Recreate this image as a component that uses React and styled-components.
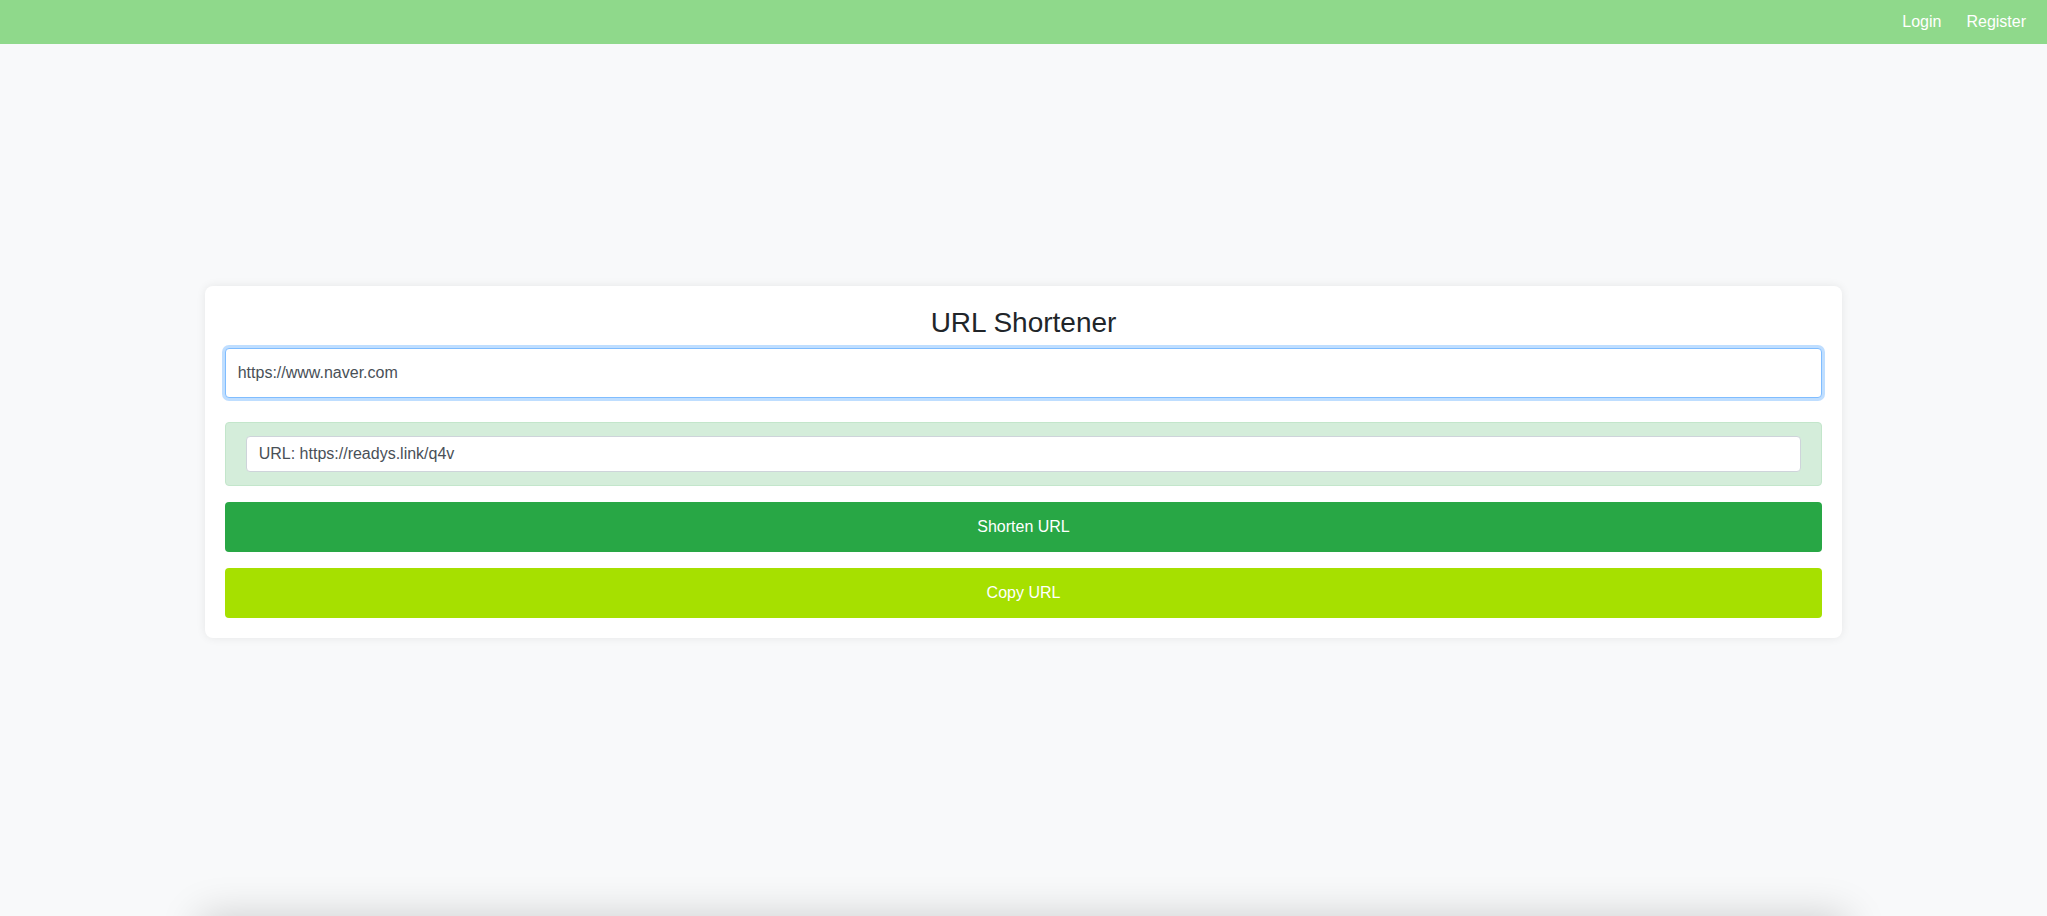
import React from 'react';
import styled, { createGlobalStyle } from 'styled-components';

const GlobalStyle = createGlobalStyle`
  * {
    box-sizing: border-box;
  }

  body {
    margin: 0;
    background: #f8f9fa;
    font-family: "Liberation Sans", Arial, sans-serif;
    color: #212529;
    overflow: hidden;
  }
`;

const NavBar = styled.header`
  height: 44px;
  background: #8fd98b;
  display: flex;
  justify-content: flex-end;
  align-items: center;
  gap: 25px;
  padding: 0 21px 1px 0;
`;

const NavLink = styled.a`
  color: #ffffff;
  font-size: 16px;
  text-decoration: none;
  cursor: pointer;
`;

const Main = styled.main`
  height: 872px;
  display: flex;
  justify-content: center;
  align-items: center;
  padding-bottom: 36px;
`;

const Card = styled.section`
  width: 80%;
  background: #ffffff;
  border-radius: 8px;
  box-shadow: 0 0 10px rgba(0, 0, 0, 0.08);
  padding: 20px;
  display: flex;
  flex-direction: column;
`;

const Title = styled.h3`
  margin: 0 0 8px;
  font-size: 28px;
  font-weight: 500;
  line-height: 34px;
  text-align: center;
  color: #212529;
`;

const UrlInput = styled.input`
  height: 50px;
  width: 100%;
  padding: 0 12px;
  font-family: inherit;
  font-size: 16px;
  color: #495057;
  background: #ffffff;
  border: 1px solid #80bdff;
  border-radius: 4px;
  box-shadow: 0 0 0 3px rgba(0, 123, 255, 0.25);
  outline: none;
  margin-bottom: 24px;
`;

const ResultBox = styled.div`
  background: #d4edda;
  border: 1px solid #c3e6cb;
  border-radius: 4px;
  padding: 13px 20px;
  margin-bottom: 16px;
`;

const ResultInput = styled.input`
  width: 100%;
  height: 36px;
  padding: 0 12px;
  font-family: inherit;
  font-size: 16px;
  color: #495057;
  background: #ffffff;
  border: 1px solid #ced4da;
  border-radius: 4px;
  outline: none;
`;

const ActionButton = styled.button`
  height: 50px;
  width: 100%;
  border: none;
  border-radius: 4px;
  background: ${(p) => p.$bg};
  color: #ffffff;
  font-family: inherit;
  font-size: 16px;
  cursor: pointer;
  margin-top: ${(p) => (p.$spaced ? '16px' : '0')};
`;

const Footer = styled.footer`
  height: 60px;
  margin: 0 200px;
  background: #f8f9fa;
  box-shadow: 0 0 40px rgba(0, 0, 0, 0.18);
`;

export default function App() {
  return (
    <>
      <GlobalStyle />
      <NavBar>
        <NavLink>Login</NavLink>
        <NavLink>Register</NavLink>
      </NavBar>
      <Main>
        <Card>
          <Title>URL Shortener</Title>
          <UrlInput defaultValue="https://www.naver.com" />
          <ResultBox>
            <ResultInput readOnly value="URL: https://readys.link/q4v" />
          </ResultBox>
          <ActionButton $bg="#28a745">Shorten URL</ActionButton>
          <ActionButton $bg="#a6e000" $spaced>Copy URL</ActionButton>
        </Card>
      </Main>
      <Footer />
    </>
  );
}
